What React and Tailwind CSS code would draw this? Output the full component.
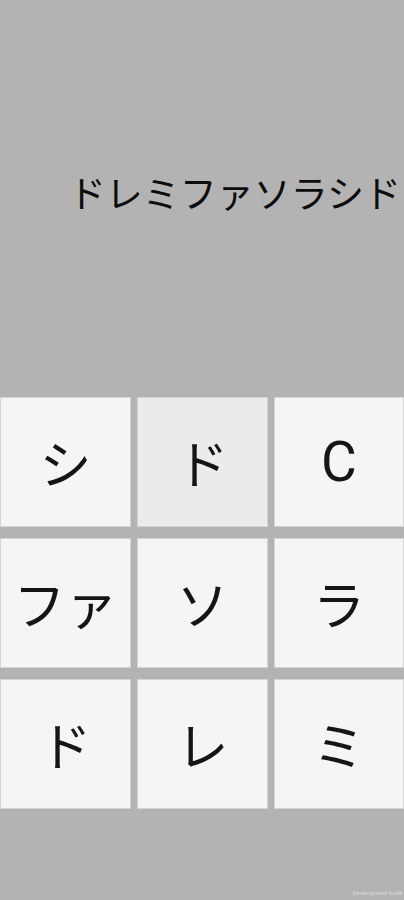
const keys = [
  { label: 'シ' },
  { label: 'ド', pressed: true },
  { label: 'C', latin: true },
  { label: 'ファ' },
  { label: 'ソ' },
  { label: 'ラ' },
  { label: 'ド' },
  { label: 'レ' },
  { label: 'ミ' },
]

function Key({ label, pressed, latin }) {
  return (
    <button
      className={
        'h-[130px] flex items-center justify-center border border-[#d4d4d4] text-[#151515] leading-none ' +
        (latin ? 'text-[55px] ' : 'text-[52px] ') +
        (pressed ? 'bg-[#ebebeb]' : 'bg-[#f5f5f5]')
      }
      style={{
        fontFamily: latin
          ? 'Roboto, "Noto Sans", sans-serif'
          : '"Noto Sans CJK JP", "Noto Sans", sans-serif',
      }}
    >
      {label}
    </button>
  )
}

export default function App() {
  return (
    <div className="relative w-[404px] h-[900px] bg-[#b3b3b3] flex flex-col overflow-hidden">
      <div className="h-[397px] flex items-center justify-end pr-[3px] pb-[12px]">
        <span
          className="text-[37px] leading-none text-[#0c0c0c] whitespace-nowrap"
          style={{ fontFamily: '"Noto Sans CJK JP", "Noto Sans", sans-serif' }}
        >
          ドレミファソラシド
        </span>
      </div>
      <div className="grid grid-cols-[131px_131px_130px] gap-x-[6px] gap-y-[11px]">
        {keys.map((k, i) => (
          <Key key={i} {...k} />
        ))}
      </div>
      <div className="absolute right-[2px] bottom-[4px] text-[6px] leading-none text-[#dcdcdc] font-['Roboto',sans-serif]">
        Development build
      </div>
    </div>
  )
}
